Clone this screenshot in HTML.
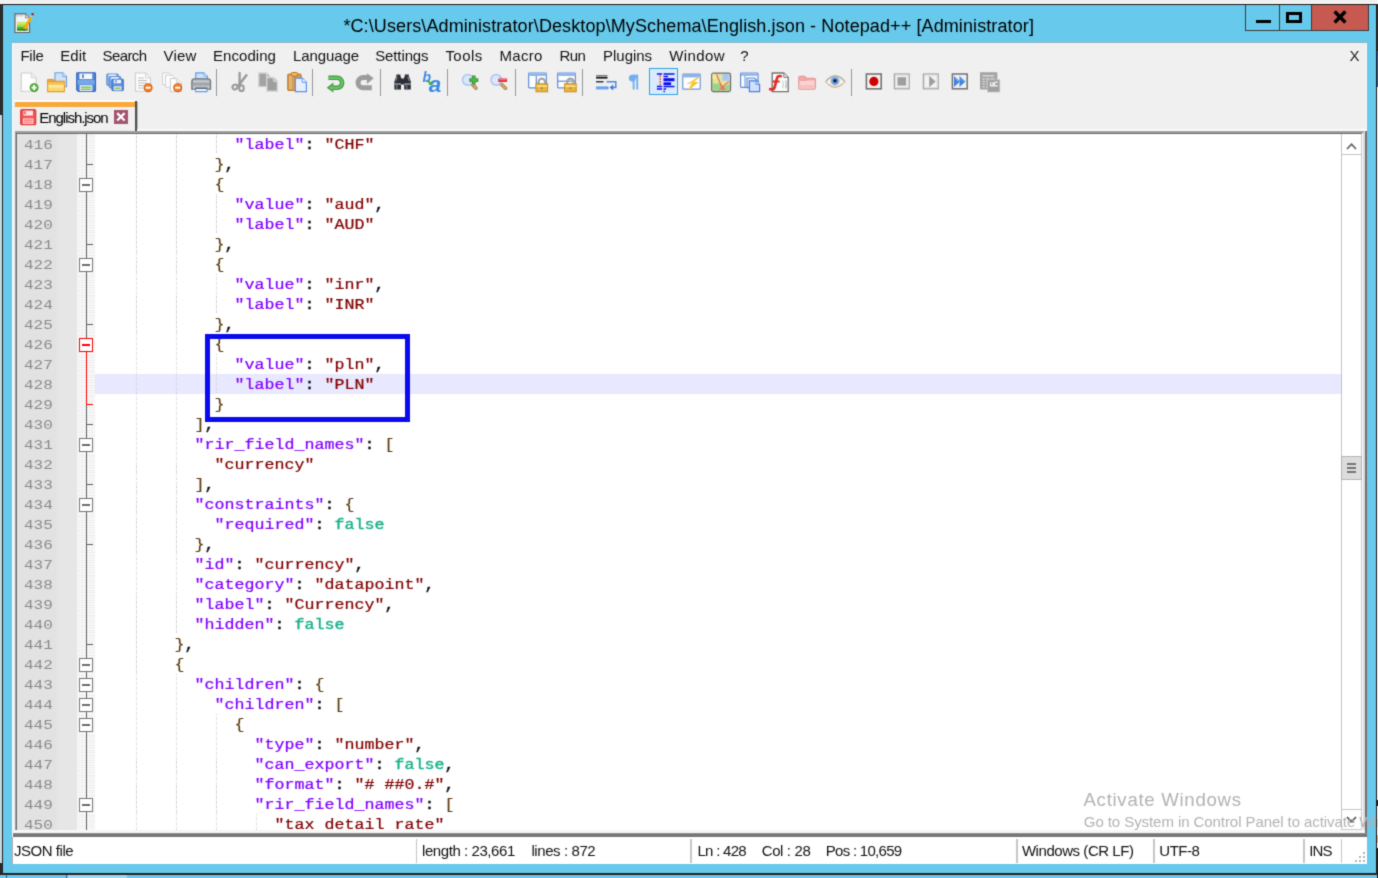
<!DOCTYPE html>
<html><head><meta charset="utf-8"><title>Notepad++</title>
<style>
html,body{margin:0;padding:0}
body{width:1378px;height:878px;position:relative;overflow:hidden;background:#67c9eb;font-family:"Liberation Sans",sans-serif}
body div,body svg,body span.t{position:absolute}
svg{overflow:visible}
span.t{white-space:pre;line-height:20px;height:20px}
#code span.t{font-family:"Liberation Mono",monospace;font-size:16.667px;transform:scaleY(.87);transform-origin:0 14.44px}
.k{color:#8000ff;-webkit-text-stroke:.25px #8000ff}.s{color:#800000;-webkit-text-stroke:.25px #800000}.o{color:#5c3c10;-webkit-text-stroke:.2px #5c3c10}.p{color:#0c0c18;-webkit-text-stroke:.45px #0c0c18}.w{color:#18af8a;-webkit-text-stroke:.4px #18af8a}.n{color:#ff8000}
#code span.ln{left:7px;color:#8a8a8a;transform:scale(.96,.81)}
.g{width:1px;height:20px;background:repeating-linear-gradient(to bottom,#cccccc 0,#cccccc 1.25px,transparent 1.25px,transparent 2.5px)}
</style></head><body>
<svg width="0" height="0" style="position:absolute"><filter id="bl" x="0" y="0" width="100%" height="100%" color-interpolation-filters="sRGB"><feConvolveMatrix order="3" kernelMatrix=".025 .1 .025 .1 .5 .1 .025 .1 .025" edgeMode="duplicate" preserveAlpha="true"/></filter></svg>
<div id="w" style="left:-6px;top:-6px;width:1390px;height:890px;background:#67c9eb;filter:url(#bl)"><div id="r" style="left:6px;top:6px;width:1378px;height:878px">

<div style="left:-6px;top:-6px;width:1390px;height:9px;background:#f0f0f0;"></div>
<div style="left:-6px;top:3px;width:1390px;height:1px;background:#fcfcfc;"></div>
<div style="left:-6px;top:4px;width:1390px;height:1px;background:#1c1414;"></div>
<div style="left:-6px;top:4px;width:8px;height:111px;background:#2d2d2d;"></div>
<div style="left:-6px;top:115px;width:8px;height:748px;background:#c5d8df;"></div>
<div style="left:-6px;top:863px;width:8px;height:11px;background:#2a2a2a;"></div>
<div style="left:2px;top:4px;width:1px;height:870px;background:#222;"></div>
<div style="left:1376px;top:4px;width:1px;height:870px;background:#1c1414;"></div>
<div style="left:1377px;top:-6px;width:7px;height:890px;background:#fff;"></div>
<div style="left:1377px;top:4px;width:7px;height:47px;background:#2d2d2d;"></div>
<div style="left:1377px;top:51px;width:7px;height:36px;background:#2a5caa;"></div>
<div style="left:1377px;top:800px;width:7px;height:6px;background:#222;"></div>
<div style="left:1377px;top:835px;width:7px;height:8px;background:#f0c040;"></div>
<div style="left:1377px;top:848px;width:7px;height:36px;background:#222;"></div>
<div style="left:-6px;top:873px;width:1383px;height:2px;background:#2c2020;"></div>
<div style="left:6px;top:875px;width:1px;height:9px;background:#3a6a80;"></div>
<div style="left:66px;top:875px;width:1px;height:9px;background:#3a6a80;"></div>
<div style="left:68px;top:875px;width:59px;height:9px;background:#9adcf2;"></div>
<svg style="left:13.6px;top:12.6px" width="20" height="20" viewBox="0 0 20 20"><path d="M1 .9h10.500l4 4v14.600h-14.500z" fill="#f4f4f4" stroke="#6a5e5e" stroke-width="1.200"/><path d="M11.500 .9v4h4" fill="#dedede" stroke="#8a8080" stroke-width=".9"/><path d="M3.200 1.200v2.400M5.600 1.200v2.400M8 1.200v2.400" stroke="#a8bcd8" stroke-width="1.400"/><rect x="3" y="9.200" width="10.600" height="8.200" fill="#48b428"/><rect x="3" y="9.200" width="10.600" height="2.600" fill="#dcea6c"/><rect x="3" y="11.800" width="10.600" height="2" fill="#a4dc50"/><rect x="3" y="16.200" width="10.600" height="1.300" fill="#1c7410"/><path d="M10.400 16.500l6.600-12.300" stroke="#f4aa0c" stroke-width="2.800"/><path d="M17 4.200l1.100-2.100" stroke="#c4c4d8" stroke-width="2.500"/><rect x="17.500" y=".2" width="2.100" height="2.100" fill="#a00c0c"/><path d="M9.600 18l.5-2 1.500.9z" fill="#333"/></svg>
<span class="t" style="left:343.40px;top:15.76px;font-size:18px;color:#000;letter-spacing:0.103px;">*C:\Users\Administrator\Desktop\MySchema\English.json - Notepad++ [Administrator]</span>
<div style="left:1245px;top:5px;width:124px;height:26px;background:#3a3a3a;"></div>
<div style="left:1246px;top:5px;width:33px;height:25px;background:#67c9eb;"></div>
<div style="left:1280px;top:5px;width:31px;height:25px;background:#67c9eb;"></div>
<div style="left:1312px;top:5px;width:56px;height:25px;background:#c75a50;"></div>
<div style="left:1255.5px;top:19.5px;width:15px;height:3.2px;background:#000;"></div>
<div style="left:1286px;top:11.5px;width:16px;height:11px;background:transparent;border:3px solid #000;box-sizing:border-box"></div>
<svg style="left:1332px;top:10px" width="16" height="14" viewBox="0 0 16 14"><path d="M2.600 1.600l10.800 11M13.400 1.600l-10.800 11" stroke="#000" stroke-width="3.500"/></svg>
<div style="left:12px;top:43px;width:1355px;height:821px;background:#f0f0f0;"></div>
<div style="left:12px;top:42px;width:1355px;height:1px;background:#8fb8c8;"></div>
<span class="t" style="left:20.50px;top:45.50px;font-size:15px;color:#111;letter-spacing:-0.291px;">File</span>
<span class="t" style="left:60.20px;top:45.50px;font-size:15px;color:#111;letter-spacing:0.080px;">Edit</span>
<span class="t" style="left:102.60px;top:45.50px;font-size:15px;color:#111;letter-spacing:-0.606px;">Search</span>
<span class="t" style="left:163.50px;top:45.50px;font-size:15px;color:#111;letter-spacing:0.217px;">View</span>
<span class="t" style="left:213.00px;top:45.50px;font-size:15px;color:#111;letter-spacing:0.048px;">Encoding</span>
<span class="t" style="left:293.10px;top:45.50px;font-size:15px;color:#111;letter-spacing:-0.107px;">Language</span>
<span class="t" style="left:375.20px;top:45.50px;font-size:15px;color:#111;letter-spacing:-0.115px;">Settings</span>
<span class="t" style="left:445.40px;top:45.50px;font-size:15px;color:#111;letter-spacing:0.467px;">Tools</span>
<span class="t" style="left:499.40px;top:45.50px;font-size:15px;color:#111;letter-spacing:0.328px;">Macro</span>
<span class="t" style="left:559.50px;top:45.50px;font-size:15px;color:#111;letter-spacing:-0.566px;">Run</span>
<span class="t" style="left:603.00px;top:45.50px;font-size:15px;color:#111;letter-spacing:-0.017px;">Plugins</span>
<span class="t" style="left:669.20px;top:45.50px;font-size:15px;color:#111;letter-spacing:0.428px;">Window</span>
<span class="t" style="left:740.30px;top:45.50px;font-size:15px;color:#111;">?</span>
<span class="t" style="left:1349.50px;top:45.50px;font-size:15px;color:#222;">X</span>
<div style="left:649.1px;top:68px;width:28.8px;height:27.3px;background:#d9ebfc;border:1.8px solid #2fa2e2;box-sizing:border-box"></div>
<svg style="left:19.5px;top:71.8px" width="20" height="20" viewBox="0 0 20 20"><path d="M1.2 1h10l5 5v13.200h-15z" fill="#fdfdfd" stroke="#cdcdcd" stroke-width="1.1"/><path d="M11.2 1v5h5" fill="#f1f1f1" stroke="#d6d6d6" stroke-width="1"/><circle cx="14.100" cy="15.600" r="4.4" fill="#3a9428"/><circle cx="14.100" cy="15.600" r="3.300" fill="#5cb846"/><path d="M14.100 13v5.200M11.500 15.600h5.200" stroke="#fff" stroke-width="1.8"/></svg>
<svg style="left:47px;top:71.8px" width="20" height="20" viewBox="0 0 20 20"><path d="M8 .8h7.800l3.700 3.700v10.300h-11.500z" fill="#cfe2fa" stroke="#6c9de0" stroke-width="1.1"/><path d="M15.800 .8v3.700h3.700" fill="#e4effc" stroke="#6c9de0" stroke-width=".9"/><path d="M.6 7.400h5.800l1.400 2h-7.200z" fill="#f0b04a" stroke="#e0962e" stroke-width="1"/><path d="M.6 9.400h16.800v10.200h-16.800z" fill="#f9cf62" stroke="#e39a34" stroke-width="1.1"/><path d="M1.400 10.200h15.200v2.600h-15.200z" fill="#f6bd52"/><path d="M1.400 12.800h15.200v3h-15.200z" fill="#fce9a4"/><path d="M1.400 15.800h15.200v3h-15.200z" fill="#fbd968"/></svg>
<svg style="left:76px;top:71.8px" width="20" height="20" viewBox="0 0 20 20"><path d="M1.500 .8h17.200q.8 0 .8.8v17q0 .8-.8.800h-16.400l-1.600-1.600v-16.200q0-.8.800-.8z" fill="#4d84d6" stroke="#3463b8" stroke-width="1.1"/><rect x="1.600" y="8" width="17" height="4.600" fill="#79a6e8"/><rect x="3.500" y="1.500" width="12.800" height="5.600" fill="#f6f9ff"/><rect x="6.200" y="2.300" width="1.500" height="3.700" fill="#3c6cc0"/><rect x="3.700" y="13.200" width="12.600" height="5.900" fill="#eef3ff"/><rect x="4.800" y="14.500" width="10.400" height="1.400" fill="#7fc14a"/><rect x="4.800" y="16.600" width="10.400" height="1.400" fill="#7fc14a"/></svg>
<svg style="left:105.5px;top:71.8px" width="20" height="20" viewBox="0 0 20 20"><g transform="translate(0.3 1.5)"><rect x=".5" y=".5" width="11.400" height="11.400" rx=".6" fill="#86aee8" stroke="#5c8ad4" stroke-width="1"/><rect x="2.400" y="1" width="7.200" height="3.600" fill="#f2f6ff"/></g><g transform="translate(2.8 4)"><rect x=".5" y=".5" width="11.400" height="11.400" rx=".6" fill="#86aee8" stroke="#5c8ad4" stroke-width="1"/><rect x="2.400" y="1" width="7.200" height="3.600" fill="#f2f6ff"/></g><g transform="translate(5.4 6.7)"><rect x=".5" y=".5" width="11.400" height="11.400" rx=".6" fill="#5a8fdd" stroke="#3b6dc0" stroke-width="1"/><rect x="2.400" y="1" width="7.200" height="3.600" fill="#f2f6ff"/><rect x="4" y="1.500" width="1.200" height="2.300" fill="#3c6cc0"/><rect x="2.400" y="7.600" width="7.600" height="4" fill="#eef3ff"/><rect x="3.300" y="8.800" width="5.800" height="1.700" fill="#86c64a"/></g></svg>
<svg style="left:133.9px;top:71.8px" width="20" height="20" viewBox="0 0 20 20"><path d="M1.5 1h10l5 5v13.200h-15z" fill="#fdfdfd" stroke="#cdcdcd" stroke-width="1.1"/><path d="M11.500 1v5h5" fill="#f1f1f1" stroke="#d6d6d6" stroke-width="1"/><path d="M4 6h6M4 8.500h9M4 11h9M4 13.500h6M4 16h5" stroke="#bdbdbd" stroke-width="1.1"/><circle cx="14.100" cy="15.700" r="4.500" fill="#d55a12"/><circle cx="14.100" cy="15.700" r="3.400" fill="#f0832f"/><path d="M11.600 15.700h5" stroke="#fff" stroke-width="1.900"/></svg>
<svg style="left:162px;top:71.8px" width="20" height="20" viewBox="0 0 20 20"><path d="M.6 .9h6.400l3 3v8.600h-9.400z" fill="#fdfdfd" stroke="#cfcfcf"/><path d="M3.600 3.200h6.400l3 3v9h-9.400z" fill="#fdfdfd" stroke="#cfcfcf"/><path d="M8.300 6.500h6.500l4.600 4.600v8.500h-11.100z" fill="#fdfdfd" stroke="#c9c9c9"/><path d="M14.800 6.500v4.600h4.600" fill="#f0f0f0" stroke="#d2d2d2"/><circle cx="15.700" cy="15.700" r="4.500" fill="#d55a12"/><circle cx="15.700" cy="15.700" r="3.400" fill="#f0832f"/><path d="M13.200 15.700h5" stroke="#fff" stroke-width="1.900"/></svg>
<svg style="left:190.5px;top:71.8px" width="20" height="20" viewBox="0 0 20 20"><path d="M4.800 .8h8l3.600 3.400v4.800h-11.600z" fill="#cde3fb" stroke="#5f9de8" stroke-width="1.200"/><path d="M12.800 .8v3.400h3.600" fill="#e6f1fd" stroke="#5f9de8" stroke-width=".8"/><path d="M.8 9.500q0-2.800 2.800-2.800h13.200q2.800 0 2.800 2.800v7.700h-18.800z" fill="#9ea3a9" stroke="#6c7178" stroke-width="1.100"/><rect x="2" y="8.200" width="16.400" height="2.400" fill="#c4c8cd"/><rect x="1.500" y="12.500" width="17.400" height="1.600" fill="#a9adb3"/><rect x="2" y="14.200" width="16.400" height="2.200" fill="#c9ccd1"/><path d="M4.600 16.400h11.400v3.200h-11.400z" fill="#eef4fb" stroke="#5f9de8" stroke-width="1.100"/><path d="M4.200 16.200h12.200" stroke="#5c6168" stroke-width="1.300"/></svg>
<div style="left:215.8px;top:68.5px;width:1.4px;height:27px;background:#969696;"></div>
<svg style="left:229px;top:71.8px" width="20" height="20" viewBox="0 0 20 20"><path d="M10.600 .8v11.500" stroke="#999" stroke-width="2.300" stroke-linecap="round"/><path d="M17.400 3.200l-8 10.300" stroke="#999" stroke-width="2.500" stroke-linecap="round"/><ellipse cx="6" cy="15" rx="2.600" ry="2.300" transform="rotate(-35 6 15)" fill="none" stroke="#999" stroke-width="2"/><ellipse cx="12.500" cy="16.200" rx="2.300" ry="2.900" fill="none" stroke="#999" stroke-width="2"/></svg>
<svg style="left:258px;top:71.8px" width="20" height="20" viewBox="0 0 20 20"><path d="M.8 1h7.600l3.800 3.800v9.800h-11.400z" fill="#a3a3a3" stroke="#d2d2d2" stroke-width="1.400"/><path d="M8.400 1v3.800h3.800" fill="#bcbcbc" stroke="#d6d6d6" stroke-width="1"/><path d="M8.800 5.600h6.800l3.800 3.800v9.800h-10.600z" fill="#9e9e9e" stroke="#d6d6d6" stroke-width="1.400"/><path d="M15.600 5.600v3.800h3.800" fill="#b8b8b8" stroke="#dadada" stroke-width="1"/></svg>
<svg style="left:287px;top:71.8px" width="20" height="20" viewBox="0 0 20 20"><rect x=".8" y="2" width="13.200" height="16.500" rx="1.300" fill="#d89b4e" stroke="#bf7a28" stroke-width="1.200"/><rect x="2" y="3.600" width="3" height="13.600" fill="#e4b474"/><rect x="4.400" y=".5" width="6" height="3.600" rx="1" fill="#efc05a" stroke="#b87422" stroke-width="1"/><path d="M8.400 6.200h6.800l4.200 4.200v9.200h-11z" fill="#e6efff" stroke="#5f8fe8" stroke-width="1.200"/><path d="M15.200 6.200v4.200h4.200" fill="#f4f8ff" stroke="#5f8fe8" stroke-width=".9"/></svg>
<div style="left:311.9px;top:68.5px;width:1.4px;height:27px;background:#969696;"></div>
<svg style="left:326px;top:71.8px" width="20" height="20" viewBox="0 0 20 20"><path d="M2.500 5.800h8.600a5 5 0 0 1 0 10h-4.500" fill="none" stroke="#3f9a3c" stroke-width="4.600"/><path d="M.8 15.800l6.600-5.200v10z" fill="#3f9a3c"/><path d="M2.500 5.800h8.600a5 5 0 0 1 0 10h-5" fill="none" stroke="#6cc468" stroke-width="2.200"/><path d="M2.800 15.800l3.800-2.800v5.400z" fill="#6cc468"/></svg>
<svg style="left:355px;top:71.8px" width="20" height="20" viewBox="0 0 20 20"><path d="M16.800 15.800h-8.600a5.100 5.100 0 0 1 0-10.200h4.500" fill="none" stroke="#9c9c9c" stroke-width="5"/><path d="M18.700 6.300l-6.800 5.600v-10.600z" fill="#9c9c9c"/></svg>
<div style="left:379.5px;top:68.5px;width:1.4px;height:27px;background:#969696;"></div>
<svg style="left:393px;top:71.8px" width="20" height="20" viewBox="0 0 20 20"><path d="M1.400 9.500l2-5.500v-1.400h4v1.400l1 2.500h2.400l1-2.500v-1.400h4v1.400l2 5.500v8h-6.600v-5h-3.200v5h-6.600z" fill="#2a2e35"/><rect x="1.400" y="11.300" width="6.600" height="1.500" fill="#9aa0a8"/><rect x="11.200" y="11.300" width="6.600" height="1.500" fill="#9aa0a8"/><rect x="3" y="12.800" width="1.600" height="4.700" fill="#6a7078"/><rect x="12.800" y="12.800" width="1.600" height="4.700" fill="#6a7078"/><path d="M4.200 4.500l-1.400 4.500M14.800 4.500l1.400 4.500" stroke="#7a828c" stroke-width="1.200"/></svg>
<svg style="left:421.5px;top:71.8px" width="20" height="20" viewBox="0 0 20 20"><text x=".4" y="10.200" font-family="Liberation Sans,sans-serif" font-style="italic" font-weight="bold" font-size="14" fill="#3c8be6">b</text><text x="6.800" y="20.200" font-family="Liberation Sans,sans-serif" font-style="italic" font-weight="bold" font-size="22.500" fill="#3c8be6">a</text><path d="M5 8.200l4 3.600" stroke="#4aa648" stroke-width="2"/><path d="M11 13.600l-4.600-.8 3.400-3.200z" fill="#4aa648"/></svg>
<div style="left:446.8px;top:68.5px;width:1.4px;height:27px;background:#969696;"></div>
<svg style="left:460px;top:71.8px" width="20" height="20" viewBox="0 0 20 20"><path d="M12 12l4 4.200" stroke="#b5864a" stroke-width="3.600" stroke-linecap="round"/><path d="M12.400 12.400l3.600 3.800" stroke="#d9b27c" stroke-width="1.300" stroke-linecap="round"/><circle cx="7.800" cy="7.900" r="5.300" fill="#dbe8fb" stroke="#a9c6ee" stroke-width="1.500"/><path d="M13.800 3.600v9M9.300 8.100h9" stroke="#3a9436" stroke-width="3.600"/><path d="M13.800 4.600v7M10.300 8.100h7" stroke="#5cb452" stroke-width="1.600"/></svg>
<svg style="left:489px;top:71.8px" width="20" height="20" viewBox="0 0 20 20"><path d="M12 12l4.500 4.200" stroke="#b5864a" stroke-width="3.600" stroke-linecap="round"/><path d="M12.400 12.400l4 3.800" stroke="#d9b27c" stroke-width="1.300" stroke-linecap="round"/><circle cx="7.300" cy="7.900" r="5.300" fill="#dbe8fb" stroke="#a9c6ee" stroke-width="1.500"/><rect x="9.200" y="6.400" width="8.900" height="3.700" rx=".5" fill="#e8283a"/><rect x="9.800" y="7" width="7.700" height="1.300" fill="#f4707a"/></svg>
<div style="left:514.7px;top:68.5px;width:1.4px;height:27px;background:#969696;"></div>
<svg style="left:528px;top:71.8px" width="20" height="20" viewBox="0 0 20 20"><rect x=".7" y="1" width="17.600" height="14.800" rx=".8" fill="#fff" stroke="#5c8cd8" stroke-width="1.200"/><rect x="1.300" y="1.600" width="16.400" height="2.300" fill="#8cb2ea"/><path d="M8.300 3.900v11.900" stroke="#5c8cd8" stroke-width="1.200"/><path d="M10.6 12v-2.200a3.200 3.200 0 0 1 6.400 0v2.200" fill="none" stroke="#a4a4a4" stroke-width="2.200"/><rect x="8" y="11.800" width="11.600" height="8" fill="#e8b540" stroke="#c88c1e" stroke-width="1"/><rect x="8.6" y="13.400" width="10.400" height="1.600" fill="#f7e090"/><rect x="13" y="15.300" width="1.600" height="1.800" fill="#a87818"/></svg>
<svg style="left:557px;top:71.8px" width="20" height="20" viewBox="0 0 20 20"><rect x=".7" y="1" width="17.600" height="14.800" rx=".8" fill="#fff" stroke="#5c8cd8" stroke-width="1.200"/><rect x="1.300" y="1.600" width="16.400" height="2.300" fill="#8cb2ea"/><path d="M.7 9.200h17.600" stroke="#5c8cd8" stroke-width="1.200"/><path d="M10.2 12v-2.200a3.200 3.200 0 0 1 6.400 0v2.200" fill="none" stroke="#a4a4a4" stroke-width="2.200"/><rect x="7.6" y="11.800" width="11.600" height="8" fill="#e8b540" stroke="#c88c1e" stroke-width="1"/><rect x="8.2" y="13.400" width="10.400" height="1.600" fill="#f7e090"/><rect x="12.6" y="15.300" width="1.600" height="1.800" fill="#a87818"/></svg>
<div style="left:581.9px;top:68.5px;width:1.4px;height:27px;background:#969696;"></div>
<svg style="left:595.5px;top:71.8px" width="20" height="20" viewBox="0 0 20 20"><rect x=".1" y="3.100" width="11.400" height="1.400" fill="#6a6a6a"/><rect x=".1" y="5" width="11.400" height="1.600" fill="#111"/><rect x=".1" y="9" width="7.400" height="1.500" fill="#333"/><path d="M10.500 9.700h9.300v5.800h-4.500" fill="none" stroke="#4a86dc" stroke-width="1.400"/><path d="M13.600 15.500l3.600-3v6z" fill="#3a76d0"/><rect x=".1" y="14.300" width="12.300" height="3.200" fill="#7fb0ee"/><rect x=".1" y="15.300" width="12.300" height="1.200" fill="#5b97e6"/></svg>
<svg style="left:623px;top:71.8px" width="20" height="20" viewBox="0 0 20 20"><path d="M10.600 2.800v14.700M14.200 2.800v14.700" stroke="#74aef0" stroke-width="1.900"/><path d="M15.200 2.700h-6a3.400 3.400 0 0 0 0 6.800h2z" fill="#74aef0"/></svg>
<svg style="left:654px;top:71.8px" width="20" height="20" viewBox="0 0 20 20"><path d="M2.900 2.100h5.200M9.500 2.100h11M9.500 4.500h4.600M2.900 14.600h5.200M9.500 14.600h11M2.900 17h5.200M9.500 17h2.600M9.500 19.400h1.400" stroke="#0a0aee" stroke-width="1.500"/><rect x="9.500" y="6.200" width="11" height="3" fill="#0a0aee"/><rect x="9.500" y="10.300" width="7.600" height="2.800" fill="#0a0aee"/><path d="M6.200 3.600v9.800" stroke="#f03030" stroke-width="1.500" stroke-dasharray="1.400 1.300"/></svg>
<svg style="left:682px;top:71.8px" width="20" height="20" viewBox="0 0 20 20"><rect x=".8" y="2.200" width="17.400" height="15" rx=".8" fill="#fff" stroke="#6a98dc" stroke-width="1.200"/><rect x="1.400" y="2.800" width="16.200" height="2.600" fill="#8cb2ea"/><path d="M15.400 5.600l-11 6.400h5l-4 7.200 11.400-9.200h-5l5.600-4.400z" fill="#f4c430"/><path d="M14.200 6l-7 5.600h3.800" fill="none" stroke="#fbe38a" stroke-width=".9"/></svg>
<svg style="left:710.6px;top:71.8px" width="20" height="20" viewBox="0 0 20 20"><rect x=".7" y="1.200" width="18.800" height="18.400" rx="1.800" fill="#dde37a" stroke="#6a6a78" stroke-width="1.300"/><path d="M11 2h7.700v7h-7.700z" fill="#a4c6ec"/><path d="M1.500 11.500h7.500l2 3.500 7.800-3v6.800h-17.300z" fill="#86c878"/><path d="M1.500 2h4v5h-4z" fill="#ece88a"/><path d="M5.500 2.200l6.500 16M17.800 9.500l-9.300 8.300M9.500 11.800l4.500 6" stroke="#ee5038" stroke-width="1.300" fill="none"/><path d="M12.500 3.200h5M12.500 5h5M12.500 6.800h4" stroke="#7fa6dc" stroke-width=".7"/><rect x="1.400" y="1.900" width="17.400" height="17" fill="#fff" opacity=".18"/></svg>
<svg style="left:739.5px;top:71.8px" width="20" height="20" viewBox="0 0 20 20"><rect x=".6" y="1" width="17.400" height="14.400" rx=".8" fill="#fff" stroke="#5c8cd8" stroke-width="1.200"/><rect x="1.200" y="1.600" width="16.200" height="2.200" fill="#8cb2ea"/><path d="M5 3.800v11.600" stroke="#5c8cd8" stroke-width="1"/><path d="M7 6h7.600l3.600 3.600v6h-11.200z" fill="#dbe8fb" stroke="#5c8cd8" stroke-width="1.100"/><path d="M9.400 8.800h6.600l3.600 3.600v7.200h-10.200z" fill="#cfe0fb" stroke="#4a7fd6" stroke-width="1.200"/><path d="M16 8.800v3.600h3.600" fill="#e6f0fd" stroke="#4a7fd6" stroke-width=".9"/></svg>
<svg style="left:768.5px;top:71.8px" width="20" height="20" viewBox="0 0 20 20"><path d="M3.200 1h11.600l4.400 4.400v14.200h-16z" fill="#fdfdfd" stroke="#707070" stroke-width="1.300"/><path d="M14.800 1v4.400h4.400" fill="#e4e4e4" stroke="#808080" stroke-width="1"/><path d="M13.400 8.500q2 4 0 8" fill="none" stroke="#cfd8cf" stroke-width="1.200"/><path d="M16.400 8.500q2 4 0 8" fill="none" stroke="#c4c4c4" stroke-width="1.300"/><path d="M11.800 4.200q-3.200-1-4 2.600l-2 8q-.8 3.200-4.600 2.400" fill="none" stroke="#e62a2a" stroke-width="2.700" stroke-linecap="round"/><path d="M3.800 9.500h6.800" stroke="#e62a2a" stroke-width="2.100"/></svg>
<svg style="left:797px;top:71.8px" width="20" height="20" viewBox="0 0 20 20"><path d="M1.800 5.600q0-1.200 1.200-1.200h4.600l1.600 1.800h8q1.200 0 1.200 1.200v8.600q0 1.200-1.200 1.200h-14.200q-1.200 0-1.200-1.200z" fill="#f2acac" stroke="#e89494" stroke-width="1.100"/><path d="M2.500 8.400h15.200v8.100h-15.200z" fill="#f9d2d2"/><path d="M2.500 8.200h7l1.200-1.400h7" fill="none" stroke="#ea9a9a" stroke-width="1"/><path d="M2.500 13h15.200v3.500h-15.200z" fill="#f6c0c0"/></svg>
<svg style="left:825.3px;top:71.8px" width="20" height="20" viewBox="0 0 20 20"><path d="M.6 9.700q9.700-11 19.400 0q-9.700 10-19.400 0z" fill="#f7f4ee" stroke="#dcc8a6" stroke-width="1.300"/><path d="M1 9.200q9.300-10.400 18.600 0" fill="none" stroke="#b8b0a8" stroke-width="1.300"/><circle cx="10" cy="8.900" r="4.500" fill="#86b0e4"/><circle cx="10" cy="8.900" r="3" fill="#6a98d6"/><circle cx="10" cy="8.700" r="1.700" fill="#121822"/><path d="M3 12.500q7 6 14 0" fill="none" stroke="#eab0a0" stroke-width="1"/></svg>
<div style="left:850.7px;top:68.5px;width:1.4px;height:27px;background:#969696;"></div>
<svg style="left:864px;top:71.8px" width="20" height="20" viewBox="0 0 20 20"><rect x="2.400" y="2" width="14.800" height="14.800" fill="#f2f2f2" stroke="#6a6a6a" stroke-width="1.5"/><circle cx="9.900" cy="9.400" r="4.600" fill="#d00000"/></svg>
<svg style="left:892.4px;top:71.8px" width="20" height="20" viewBox="0 0 20 20"><rect x="2.400" y="2" width="14.800" height="14.800" fill="#f2f2f2" stroke="#a6a6a6" stroke-width="1.3"/><rect x="3.600" y="3.200" width="12.400" height="12.400" fill="none" stroke="#dedede" stroke-width="1"/><rect x="5.500" y="5.200" width="8.600" height="8.400" fill="#9e9e9e"/></svg>
<svg style="left:921px;top:71.8px" width="20" height="20" viewBox="0 0 20 20"><rect x="2.400" y="2" width="14.800" height="14.800" fill="#f2f2f2" stroke="#a6a6a6" stroke-width="1.3"/><rect x="3.600" y="3.200" width="12.400" height="12.400" fill="none" stroke="#dedede" stroke-width="1"/><path d="M8.200 3.800l6.400 5.700-6.400 5.800z" fill="#9e9e9e"/></svg>
<svg style="left:950px;top:71.8px" width="20" height="20" viewBox="0 0 20 20"><rect x="2.400" y="2" width="14.800" height="14.800" fill="#f2f2f2" stroke="#707070" stroke-width="1.5"/><path d="M4 4l6 5.500-6 5.600z" fill="#3c82e0"/><path d="M9.500 4l6 5.500-6 5.600z" fill="#3c82e0"/><path d="M5 6.200l3.600 3.300M10.500 6.200l3.600 3.300" stroke="#8ab8f2" stroke-width="1"/></svg>
<svg style="left:979.5px;top:71.8px" width="20" height="20" viewBox="0 0 20 20"><rect x="0" y=".2" width="17.300" height="17.300" fill="#a4a4a4"/><rect x="2.400" y="3" width="11.800" height="1.600" fill="#d4d4d4"/><path d="M2.400 7h2.400M6 7h3.400M10.600 7h3.600M2.400 9.600h2.400M6 9.600h2M2.400 12.200h2.400M6 12.200h2M2.400 14.800h2.400M6 14.800h2" stroke="#d8d8d8" stroke-width="1.300"/><rect x="7.600" y="7.800" width="12.200" height="12.200" fill="#a0a0a0" stroke="#c4c4c4" stroke-width=".7"/><path d="M10.600 10.200v3.600h2.400v-3.600M14.400 10.400h3.400M14.400 10.200v3.600h3.400" stroke="#f4f4f4" stroke-width="1.300" fill="none"/></svg>
<div style="left:14px;top:99.6px;width:122px;height:2px;background:#fcfcfc;"></div>
<div style="left:14.5px;top:101.6px;width:120.5px;height:5px;background:#f9a83a;"></div>
<div style="left:14.5px;top:106.5px;width:120.5px;height:25px;background:#f0f0f0;"></div>
<div style="left:135px;top:100.8px;width:1.6px;height:29.8px;background:#505050;"></div>
<div style="left:136.6px;top:102px;width:0.8px;height:28px;background:#b8b8b8;"></div>
<svg style="left:19.6px;top:109.4px" width="16.4" height="16.4" viewBox="0 0 20 20"><rect x=".9" y=".9" width="18.200" height="18.200" rx="1.500" fill="#f45252" stroke="#e03c3c" stroke-width="1.600"/><rect x="4.200" y="2" width="11.600" height="6" fill="#ffe4e4"/><rect x="5.200" y="2.800" width="1.800" height="3.600" fill="#ec4a4a"/><rect x="3.600" y="11.400" width="12.800" height="6.800" fill="#ffd4d4"/><path d="M4.800 13.600h10.400M4.800 16.200h10.400" stroke="#f46e6e" stroke-width="1.400"/></svg>
<span class="t" style="left:39.30px;top:108.30px;font-size:15px;color:#000;letter-spacing:-1.045px;">English.json</span>
<div style="left:114.3px;top:110.3px;width:13.8px;height:13.6px;background:#a4556e;"></div>
<svg style="left:114.3px;top:110.3px" width="13.8" height="13.6" viewBox="0 0 14 14"><path d="M3.2 3.2l7.6 7.6M10.800 3.2l-7.6 7.6" stroke="#fff" stroke-width="2.3"/></svg>
<div style="left:12px;top:43px;width:1.2px;height:794px;background:#fbfbfb;"></div>
<div style="left:1366px;top:43px;width:1px;height:87px;background:#fbfbfb;"></div>
<div style="left:137px;top:129px;width:1229px;height:2.4px;background:#fafafa;"></div>
<div style="left:14.5px;top:131.4px;width:1349px;height:1.4px;background:#a0a0a0;"></div>
<div style="left:15.6px;top:132.7px;width:1347px;height:1.5px;background:#6a6a6a;"></div>
<div style="left:14.5px;top:131.4px;width:1.3px;height:699px;background:#a0a0a0;"></div>
<div style="left:15.7px;top:132.7px;width:1.4px;height:697.7px;background:#6a6a6a;"></div>
<div style="left:1362.2px;top:133px;width:2.5px;height:698px;background:#fdfdfd;"></div>
<div style="left:1363.4px;top:133px;width:1.2px;height:698px;background:#dcdcdc;"></div>
<div style="left:1364.5px;top:131px;width:1px;height:702px;background:#aaa6a6;"></div>
<div style="left:1365.3px;top:130.5px;width:1.7px;height:703px;background:#787070;"></div>
<div id="ed" style="left:17px;top:134px;width:1345px;height:696px;background:#fff;overflow:hidden">
<div style="left:0px;top:0px;width:40px;height:696px;background:#e2e2e2;"></div>
<div style="left:40px;top:0px;width:20px;height:696px;background:#e6e6e6;"></div>
<div style="left:60px;top:0px;width:17.5px;height:696px;background:#fff;background:repeating-conic-gradient(#fff 0 25%,#ebebeb 0 50%) 0 0/2.5px 2.5px"></div>
<div style="left:78px;top:240px;width:1246px;height:20px;background:#e8e8ff;"></div>
<div id="code" style="left:0;top:0;width:1345px;height:696px">
<span class="t ln" style="top:1.06px">416</span>
<span class="t" style="left:217.6px;top:1.06px;color:#000"><span class="k">&quot;label&quot;</span><span class="p">:</span> <span class="s">&quot;CHF&quot;</span></span>
<div class="g" style="left:119px;top:0px"></div>
<div class="g" style="left:159px;top:0px"></div>
<div class="g" style="left:199px;top:0px"></div>
<div style="left:68.8px;top:0px;width:1.25px;height:20px;background:#606060;"></div>
<span class="t ln" style="top:21.06px">417</span>
<span class="t" style="left:197.6px;top:21.06px;color:#000"><span class="o">}</span><span class="p">,</span></span>
<div class="g" style="left:119px;top:20px"></div>
<div class="g" style="left:159px;top:20px"></div>
<div style="left:68.8px;top:20px;width:1.25px;height:20px;background:#606060;"></div>
<div style="left:69.4px;top:30px;width:7px;height:1.25px;background:#606060;"></div>
<span class="t ln" style="top:41.06px">418</span>
<span class="t" style="left:197.6px;top:41.06px;color:#000"><span class="o">{</span></span>
<div class="g" style="left:119px;top:40px"></div>
<div class="g" style="left:159px;top:40px"></div>
<div style="left:68.8px;top:40px;width:1.25px;height:5px;background:#606060;"></div>
<div style="left:68.8px;top:56px;width:1.25px;height:4px;background:#606060;"></div>
<div style="left:62.3px;top:44.1px;width:13.9px;height:13.5px;background:#fff;border:1.700px solid #7a7a7a;box-sizing:border-box"></div>
<div style="left:65.3px;top:50px;width:8.2px;height:1.8px;background:#6c6c6c;"></div>
<span class="t ln" style="top:61.06px">419</span>
<span class="t" style="left:217.6px;top:61.06px;color:#000"><span class="k">&quot;value&quot;</span><span class="p">:</span> <span class="s">&quot;aud&quot;</span><span class="p">,</span></span>
<div class="g" style="left:119px;top:60px"></div>
<div class="g" style="left:159px;top:60px"></div>
<div class="g" style="left:199px;top:60px"></div>
<div style="left:68.8px;top:60px;width:1.25px;height:20px;background:#606060;"></div>
<span class="t ln" style="top:81.06px">420</span>
<span class="t" style="left:217.6px;top:81.06px;color:#000"><span class="k">&quot;label&quot;</span><span class="p">:</span> <span class="s">&quot;AUD&quot;</span></span>
<div class="g" style="left:119px;top:80px"></div>
<div class="g" style="left:159px;top:80px"></div>
<div class="g" style="left:199px;top:80px"></div>
<div style="left:68.8px;top:80px;width:1.25px;height:20px;background:#606060;"></div>
<span class="t ln" style="top:101.06px">421</span>
<span class="t" style="left:197.6px;top:101.06px;color:#000"><span class="o">}</span><span class="p">,</span></span>
<div class="g" style="left:119px;top:100px"></div>
<div class="g" style="left:159px;top:100px"></div>
<div style="left:68.8px;top:100px;width:1.25px;height:20px;background:#606060;"></div>
<div style="left:69.4px;top:110px;width:7px;height:1.25px;background:#606060;"></div>
<span class="t ln" style="top:121.06px">422</span>
<span class="t" style="left:197.6px;top:121.06px;color:#000"><span class="o">{</span></span>
<div class="g" style="left:119px;top:120px"></div>
<div class="g" style="left:159px;top:120px"></div>
<div style="left:68.8px;top:120px;width:1.25px;height:5px;background:#606060;"></div>
<div style="left:68.8px;top:136px;width:1.25px;height:4px;background:#606060;"></div>
<div style="left:62.3px;top:124.1px;width:13.9px;height:13.5px;background:#fff;border:1.700px solid #7a7a7a;box-sizing:border-box"></div>
<div style="left:65.3px;top:130px;width:8.2px;height:1.8px;background:#6c6c6c;"></div>
<span class="t ln" style="top:141.06px">423</span>
<span class="t" style="left:217.6px;top:141.06px;color:#000"><span class="k">&quot;value&quot;</span><span class="p">:</span> <span class="s">&quot;inr&quot;</span><span class="p">,</span></span>
<div class="g" style="left:119px;top:140px"></div>
<div class="g" style="left:159px;top:140px"></div>
<div class="g" style="left:199px;top:140px"></div>
<div style="left:68.8px;top:140px;width:1.25px;height:20px;background:#606060;"></div>
<span class="t ln" style="top:161.06px">424</span>
<span class="t" style="left:217.6px;top:161.06px;color:#000"><span class="k">&quot;label&quot;</span><span class="p">:</span> <span class="s">&quot;INR&quot;</span></span>
<div class="g" style="left:119px;top:160px"></div>
<div class="g" style="left:159px;top:160px"></div>
<div class="g" style="left:199px;top:160px"></div>
<div style="left:68.8px;top:160px;width:1.25px;height:20px;background:#606060;"></div>
<span class="t ln" style="top:181.06px">425</span>
<span class="t" style="left:197.6px;top:181.06px;color:#000"><span class="o">}</span><span class="p">,</span></span>
<div class="g" style="left:119px;top:180px"></div>
<div class="g" style="left:159px;top:180px"></div>
<div style="left:68.8px;top:180px;width:1.25px;height:20px;background:#606060;"></div>
<div style="left:69.4px;top:190px;width:7px;height:1.25px;background:#606060;"></div>
<span class="t ln" style="top:201.06px">426</span>
<span class="t" style="left:197.6px;top:201.06px;color:#000"><span class="o">{</span></span>
<div class="g" style="left:119px;top:200px"></div>
<div class="g" style="left:159px;top:200px"></div>
<div style="left:68.8px;top:200px;width:1.25px;height:5px;background:#606060;"></div>
<div style="left:68.8px;top:216px;width:1.25px;height:4px;background:#ff0000;"></div>
<div style="left:62.3px;top:204.1px;width:13.9px;height:13.5px;background:#fff;border:1.700px solid #ff0000;box-sizing:border-box"></div>
<div style="left:65.3px;top:210px;width:8.2px;height:1.8px;background:#ff0000;"></div>
<span class="t ln" style="top:221.06px">427</span>
<span class="t" style="left:217.6px;top:221.06px;color:#000"><span class="k">&quot;value&quot;</span><span class="p">:</span> <span class="s">&quot;pln&quot;</span><span class="p">,</span></span>
<div class="g" style="left:119px;top:220px"></div>
<div class="g" style="left:159px;top:220px"></div>
<div class="g" style="left:199px;top:220px"></div>
<div style="left:68.8px;top:220px;width:1.25px;height:20px;background:#ff0000;"></div>
<span class="t ln" style="top:241.06px">428</span>
<span class="t" style="left:217.6px;top:241.06px;color:#000"><span class="k">&quot;label&quot;</span><span class="p">:</span> <span class="s">&quot;PLN&quot;</span></span>
<div class="g" style="left:119px;top:240px"></div>
<div class="g" style="left:159px;top:240px"></div>
<div class="g" style="left:199px;top:240px"></div>
<div style="left:68.8px;top:240px;width:1.25px;height:20px;background:#ff0000;"></div>
<span class="t ln" style="top:261.06px">429</span>
<span class="t" style="left:197.6px;top:261.06px;color:#000"><span class="o">}</span></span>
<div class="g" style="left:119px;top:260px"></div>
<div class="g" style="left:159px;top:260px"></div>
<div style="left:68.8px;top:260px;width:1.25px;height:10.6px;background:#ff0000;"></div>
<div style="left:68.8px;top:270.6px;width:1.25px;height:9.4px;background:#606060;"></div>
<div style="left:69.4px;top:270px;width:7px;height:1.25px;background:#ff0000;"></div>
<span class="t ln" style="top:281.06px">430</span>
<span class="t" style="left:177.6px;top:281.06px;color:#000"><span class="o">]</span><span class="p">,</span></span>
<div class="g" style="left:119px;top:280px"></div>
<div class="g" style="left:159px;top:280px"></div>
<div style="left:68.8px;top:280px;width:1.25px;height:20px;background:#606060;"></div>
<div style="left:69.4px;top:290px;width:7px;height:1.25px;background:#606060;"></div>
<span class="t ln" style="top:301.06px">431</span>
<span class="t" style="left:177.6px;top:301.06px;color:#000"><span class="k">&quot;rir_field_names&quot;</span><span class="p">:</span> <span class="o">[</span></span>
<div class="g" style="left:119px;top:300px"></div>
<div class="g" style="left:159px;top:300px"></div>
<div style="left:68.8px;top:300px;width:1.25px;height:5px;background:#606060;"></div>
<div style="left:68.8px;top:316px;width:1.25px;height:4px;background:#606060;"></div>
<div style="left:62.3px;top:304.1px;width:13.9px;height:13.5px;background:#fff;border:1.700px solid #7a7a7a;box-sizing:border-box"></div>
<div style="left:65.3px;top:310px;width:8.2px;height:1.8px;background:#6c6c6c;"></div>
<span class="t ln" style="top:321.06px">432</span>
<span class="t" style="left:197.6px;top:321.06px;color:#000"><span class="s">&quot;currency&quot;</span></span>
<div class="g" style="left:119px;top:320px"></div>
<div class="g" style="left:159px;top:320px"></div>
<div style="left:68.8px;top:320px;width:1.25px;height:20px;background:#606060;"></div>
<span class="t ln" style="top:341.06px">433</span>
<span class="t" style="left:177.6px;top:341.06px;color:#000"><span class="o">]</span><span class="p">,</span></span>
<div class="g" style="left:119px;top:340px"></div>
<div class="g" style="left:159px;top:340px"></div>
<div style="left:68.8px;top:340px;width:1.25px;height:20px;background:#606060;"></div>
<div style="left:69.4px;top:350px;width:7px;height:1.25px;background:#606060;"></div>
<span class="t ln" style="top:361.06px">434</span>
<span class="t" style="left:177.6px;top:361.06px;color:#000"><span class="k">&quot;constraints&quot;</span><span class="p">:</span> <span class="o">{</span></span>
<div class="g" style="left:119px;top:360px"></div>
<div class="g" style="left:159px;top:360px"></div>
<div style="left:68.8px;top:360px;width:1.25px;height:5px;background:#606060;"></div>
<div style="left:68.8px;top:376px;width:1.25px;height:4px;background:#606060;"></div>
<div style="left:62.3px;top:364.1px;width:13.9px;height:13.5px;background:#fff;border:1.700px solid #7a7a7a;box-sizing:border-box"></div>
<div style="left:65.3px;top:370px;width:8.2px;height:1.8px;background:#6c6c6c;"></div>
<span class="t ln" style="top:381.06px">435</span>
<span class="t" style="left:197.6px;top:381.06px;color:#000"><span class="k">&quot;required&quot;</span><span class="p">:</span> <span class="w">false</span></span>
<div class="g" style="left:119px;top:380px"></div>
<div class="g" style="left:159px;top:380px"></div>
<div style="left:68.8px;top:380px;width:1.25px;height:20px;background:#606060;"></div>
<span class="t ln" style="top:401.06px">436</span>
<span class="t" style="left:177.6px;top:401.06px;color:#000"><span class="o">}</span><span class="p">,</span></span>
<div class="g" style="left:119px;top:400px"></div>
<div class="g" style="left:159px;top:400px"></div>
<div style="left:68.8px;top:400px;width:1.25px;height:20px;background:#606060;"></div>
<div style="left:69.4px;top:410px;width:7px;height:1.25px;background:#606060;"></div>
<span class="t ln" style="top:421.06px">437</span>
<span class="t" style="left:177.6px;top:421.06px;color:#000"><span class="k">&quot;id&quot;</span><span class="p">:</span> <span class="s">&quot;currency&quot;</span><span class="p">,</span></span>
<div class="g" style="left:119px;top:420px"></div>
<div class="g" style="left:159px;top:420px"></div>
<div style="left:68.8px;top:420px;width:1.25px;height:20px;background:#606060;"></div>
<span class="t ln" style="top:441.06px">438</span>
<span class="t" style="left:177.6px;top:441.06px;color:#000"><span class="k">&quot;category&quot;</span><span class="p">:</span> <span class="s">&quot;datapoint&quot;</span><span class="p">,</span></span>
<div class="g" style="left:119px;top:440px"></div>
<div class="g" style="left:159px;top:440px"></div>
<div style="left:68.8px;top:440px;width:1.25px;height:20px;background:#606060;"></div>
<span class="t ln" style="top:461.06px">439</span>
<span class="t" style="left:177.6px;top:461.06px;color:#000"><span class="k">&quot;label&quot;</span><span class="p">:</span> <span class="s">&quot;Currency&quot;</span><span class="p">,</span></span>
<div class="g" style="left:119px;top:460px"></div>
<div class="g" style="left:159px;top:460px"></div>
<div style="left:68.8px;top:460px;width:1.25px;height:20px;background:#606060;"></div>
<span class="t ln" style="top:481.06px">440</span>
<span class="t" style="left:177.6px;top:481.06px;color:#000"><span class="k">&quot;hidden&quot;</span><span class="p">:</span> <span class="w">false</span></span>
<div class="g" style="left:119px;top:480px"></div>
<div class="g" style="left:159px;top:480px"></div>
<div style="left:68.8px;top:480px;width:1.25px;height:20px;background:#606060;"></div>
<span class="t ln" style="top:501.06px">441</span>
<span class="t" style="left:157.6px;top:501.06px;color:#000"><span class="o">}</span><span class="p">,</span></span>
<div class="g" style="left:119px;top:500px"></div>
<div style="left:68.8px;top:500px;width:1.25px;height:20px;background:#606060;"></div>
<div style="left:69.4px;top:510px;width:7px;height:1.25px;background:#606060;"></div>
<span class="t ln" style="top:521.06px">442</span>
<span class="t" style="left:157.6px;top:521.06px;color:#000"><span class="o">{</span></span>
<div class="g" style="left:119px;top:520px"></div>
<div style="left:68.8px;top:520px;width:1.25px;height:5px;background:#606060;"></div>
<div style="left:68.8px;top:536px;width:1.25px;height:4px;background:#606060;"></div>
<div style="left:62.3px;top:524.1px;width:13.9px;height:13.5px;background:#fff;border:1.700px solid #7a7a7a;box-sizing:border-box"></div>
<div style="left:65.3px;top:530px;width:8.2px;height:1.8px;background:#6c6c6c;"></div>
<span class="t ln" style="top:541.06px">443</span>
<span class="t" style="left:177.6px;top:541.06px;color:#000"><span class="k">&quot;children&quot;</span><span class="p">:</span> <span class="o">{</span></span>
<div class="g" style="left:119px;top:540px"></div>
<div class="g" style="left:159px;top:540px"></div>
<div style="left:68.8px;top:540px;width:1.25px;height:5px;background:#606060;"></div>
<div style="left:68.8px;top:556px;width:1.25px;height:4px;background:#606060;"></div>
<div style="left:62.3px;top:544.1px;width:13.9px;height:13.5px;background:#fff;border:1.700px solid #7a7a7a;box-sizing:border-box"></div>
<div style="left:65.3px;top:550px;width:8.2px;height:1.8px;background:#6c6c6c;"></div>
<span class="t ln" style="top:561.06px">444</span>
<span class="t" style="left:197.6px;top:561.06px;color:#000"><span class="k">&quot;children&quot;</span><span class="p">:</span> <span class="o">[</span></span>
<div class="g" style="left:119px;top:560px"></div>
<div class="g" style="left:159px;top:560px"></div>
<div style="left:68.8px;top:560px;width:1.25px;height:5px;background:#606060;"></div>
<div style="left:68.8px;top:576px;width:1.25px;height:4px;background:#606060;"></div>
<div style="left:62.3px;top:564.1px;width:13.9px;height:13.5px;background:#fff;border:1.700px solid #7a7a7a;box-sizing:border-box"></div>
<div style="left:65.3px;top:570px;width:8.2px;height:1.8px;background:#6c6c6c;"></div>
<span class="t ln" style="top:581.06px">445</span>
<span class="t" style="left:217.6px;top:581.06px;color:#000"><span class="o">{</span></span>
<div class="g" style="left:119px;top:580px"></div>
<div class="g" style="left:159px;top:580px"></div>
<div class="g" style="left:199px;top:580px"></div>
<div style="left:68.8px;top:580px;width:1.25px;height:5px;background:#606060;"></div>
<div style="left:68.8px;top:596px;width:1.25px;height:4px;background:#606060;"></div>
<div style="left:62.3px;top:584.1px;width:13.9px;height:13.5px;background:#fff;border:1.700px solid #7a7a7a;box-sizing:border-box"></div>
<div style="left:65.3px;top:590px;width:8.2px;height:1.8px;background:#6c6c6c;"></div>
<span class="t ln" style="top:601.06px">446</span>
<span class="t" style="left:237.6px;top:601.06px;color:#000"><span class="k">&quot;type&quot;</span><span class="p">:</span> <span class="s">&quot;number&quot;</span><span class="p">,</span></span>
<div class="g" style="left:119px;top:600px"></div>
<div class="g" style="left:159px;top:600px"></div>
<div class="g" style="left:199px;top:600px"></div>
<div style="left:68.8px;top:600px;width:1.25px;height:20px;background:#606060;"></div>
<span class="t ln" style="top:621.06px">447</span>
<span class="t" style="left:237.6px;top:621.06px;color:#000"><span class="k">&quot;can_export&quot;</span><span class="p">:</span> <span class="w">false</span><span class="p">,</span></span>
<div class="g" style="left:119px;top:620px"></div>
<div class="g" style="left:159px;top:620px"></div>
<div class="g" style="left:199px;top:620px"></div>
<div style="left:68.8px;top:620px;width:1.25px;height:20px;background:#606060;"></div>
<span class="t ln" style="top:641.06px">448</span>
<span class="t" style="left:237.6px;top:641.06px;color:#000"><span class="k">&quot;format&quot;</span><span class="p">:</span> <span class="s">&quot;# ##0.#&quot;</span><span class="p">,</span></span>
<div class="g" style="left:119px;top:640px"></div>
<div class="g" style="left:159px;top:640px"></div>
<div class="g" style="left:199px;top:640px"></div>
<div style="left:68.8px;top:640px;width:1.25px;height:20px;background:#606060;"></div>
<span class="t ln" style="top:661.06px">449</span>
<span class="t" style="left:237.6px;top:661.06px;color:#000"><span class="k">&quot;rir_field_names&quot;</span><span class="p">:</span> <span class="o">[</span></span>
<div class="g" style="left:119px;top:660px"></div>
<div class="g" style="left:159px;top:660px"></div>
<div class="g" style="left:199px;top:660px"></div>
<div style="left:68.8px;top:660px;width:1.25px;height:5px;background:#606060;"></div>
<div style="left:68.8px;top:676px;width:1.25px;height:4px;background:#606060;"></div>
<div style="left:62.3px;top:664.1px;width:13.9px;height:13.5px;background:#fff;border:1.700px solid #7a7a7a;box-sizing:border-box"></div>
<div style="left:65.3px;top:670px;width:8.2px;height:1.8px;background:#6c6c6c;"></div>
<span class="t ln" style="top:681.06px">450</span>
<span class="t" style="left:257.6px;top:681.06px;color:#000"><span class="s">&quot;tax_detail_rate&quot;</span></span>
<div class="g" style="left:119px;top:680px"></div>
<div class="g" style="left:159px;top:680px"></div>
<div class="g" style="left:199px;top:680px"></div>
<div class="g" style="left:239px;top:680px"></div>
<div style="left:68.8px;top:680px;width:1.25px;height:20px;background:#606060;"></div>
</div>
<div style="left:188px;top:200px;width:205px;height:88px;background:transparent;border:5px solid #0a0af0;box-sizing:border-box"></div>
</div>
<div style="left:1340.8px;top:134px;width:1.3px;height:696px;background:#c4c4c4;"></div>
<div style="left:1342px;top:134px;width:19.4px;height:696px;background:#fff;"></div>
<div style="left:1361.2px;top:134px;width:1.2px;height:696px;background:#c8c8c8;"></div>
<div style="left:1342px;top:154.3px;width:19.4px;height:1.2px;background:#c4c4c4;"></div>
<div style="left:1342px;top:809px;width:19.4px;height:1.2px;background:#c4c4c4;"></div>
<div style="left:1341px;top:829px;width:21px;height:1.2px;background:#cacaca;"></div>
<svg style="left:1345px;top:141px" width="13" height="10" viewBox="0 0 13 10"><path d="M2 8l4.500-4.800 4.500 4.800" fill="none" stroke="#606060" stroke-width="1.7"/></svg>
<svg style="left:1345px;top:814.500px" width="13" height="10" viewBox="0 0 13 10"><path d="M2 2l4.500 4.800 4.500-4.800" fill="none" stroke="#505050" stroke-width="1.7"/></svg>
<div style="left:1341px;top:455.5px;width:20.6px;height:24.6px;background:#dcdcdc;border:1.2px solid #b4b4b4;box-sizing:border-box"></div>
<div style="left:1347px;top:463.3px;width:9px;height:2px;background:#747474;"></div>
<div style="left:1347px;top:467.2px;width:9px;height:2px;background:#747474;"></div>
<div style="left:1347px;top:471.1px;width:9px;height:2px;background:#747474;"></div>
<div style="left:14px;top:830.3px;width:1351px;height:2.6px;background:#f6f6f6;"></div>
<div style="left:12.5px;top:832.9px;width:1354.5px;height:1.3px;background:#8c8c8c;"></div>
<div style="left:12.5px;top:834px;width:1354.5px;height:2.6px;background:#767676;"></div>
<div style="left:12px;top:836.5px;width:1355px;height:27px;background:#fff;"></div>
<div style="left:12px;top:836.5px;width:1px;height:27px;background:#b8acac;"></div>
<div style="left:415.8px;top:838.5px;width:1.2px;height:24.5px;background:#c6c6c6;"></div>
<div style="left:690.4px;top:838.5px;width:1.2px;height:24.5px;background:#c6c6c6;"></div>
<div style="left:1016.4px;top:838.5px;width:1.2px;height:24.5px;background:#c6c6c6;"></div>
<div style="left:1153.4px;top:838.5px;width:1.2px;height:24.5px;background:#c6c6c6;"></div>
<div style="left:1303.4px;top:838.5px;width:1.2px;height:24.5px;background:#c6c6c6;"></div>
<div style="left:1340.8px;top:838.5px;width:1.2px;height:24.5px;background:#c6c6c6;"></div>
<span class="t" style="left:14.00px;top:841.30px;font-size:15px;color:#111;letter-spacing:-0.470px;">JSON file</span>
<span class="t" style="left:422.00px;top:841.30px;font-size:15px;color:#111;letter-spacing:-0.426px;">length : 23,661</span>
<span class="t" style="left:531.40px;top:841.30px;font-size:15px;color:#111;letter-spacing:-0.409px;">lines : 872</span>
<span class="t" style="left:697.50px;top:841.30px;font-size:15px;color:#111;letter-spacing:-0.731px;">Ln : 428</span>
<span class="t" style="left:761.70px;top:841.30px;font-size:15px;color:#111;letter-spacing:-0.372px;">Col : 28</span>
<span class="t" style="left:825.80px;top:841.30px;font-size:15px;color:#111;letter-spacing:-0.721px;">Pos : 10,659</span>
<span class="t" style="left:1021.90px;top:841.30px;font-size:15px;color:#111;letter-spacing:-0.447px;">Windows (CR LF)</span>
<span class="t" style="left:1159.30px;top:841.30px;font-size:15px;color:#111;letter-spacing:-0.475px;">UTF-8</span>
<span class="t" style="left:1309.30px;top:841.30px;font-size:15px;color:#111;letter-spacing:-0.858px;">INS</span>
<div style="left:1362.8px;top:852.3px;width:2px;height:2px;background:#b4b4b4;"></div>
<div style="left:1358.8px;top:856px;width:2px;height:2px;background:#b4b4b4;"></div>
<div style="left:1362.8px;top:856px;width:2px;height:2px;background:#b4b4b4;"></div>
<div style="left:1354.8px;top:860px;width:2px;height:2px;background:#b4b4b4;"></div>
<div style="left:1358.8px;top:860px;width:2px;height:2px;background:#b4b4b4;"></div>
<div style="left:1362.8px;top:860px;width:2px;height:2px;background:#b4b4b4;"></div>
<span class="t" style="left:1083.50px;top:789.96px;font-size:18.6px;color:#b2b2b2;letter-spacing:0.717px;">Activate Windows</span>
<span class="t" style="left:1083.80px;top:812.10px;font-size:15px;color:#b2b2b2;letter-spacing:-0.071px">Go to System in Control Panel to activate Windows.</span>
</div></div>
</body></html>
